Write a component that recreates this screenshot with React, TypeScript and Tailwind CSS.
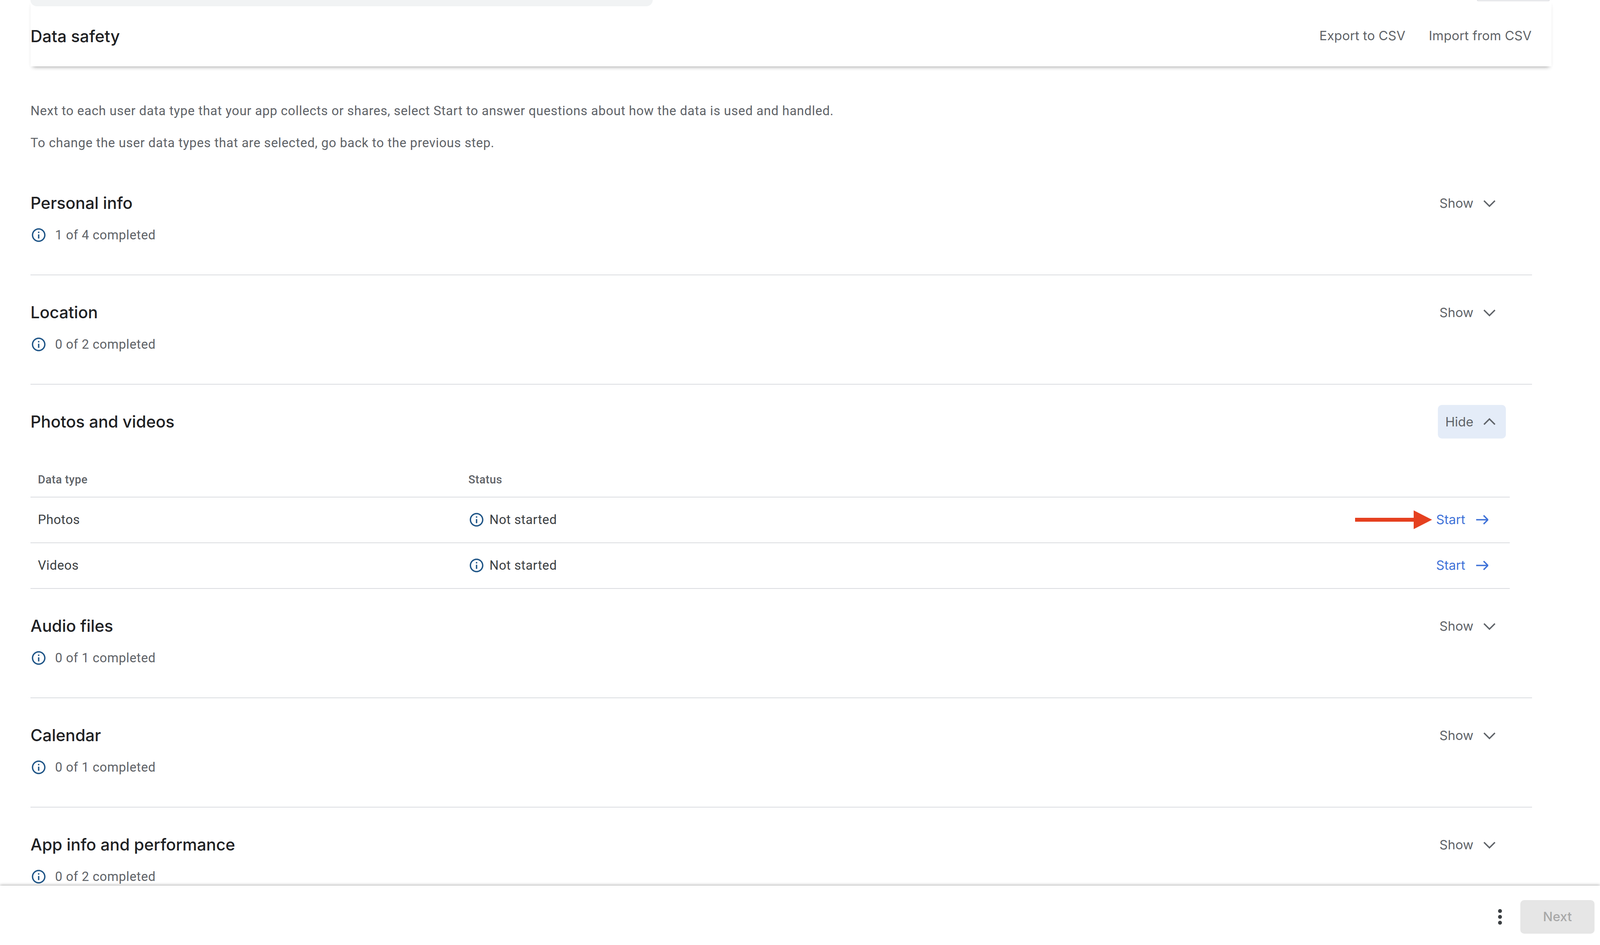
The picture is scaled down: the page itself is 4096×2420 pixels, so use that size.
import React from 'react';

const gsans = 'font-["Inter","Roboto",sans-serif]';
const roboto = 'font-["Roboto","Liberation_Sans",sans-serif]';

const InfoIcon: React.FC = () => (
    <svg viewBox="0 0 24 24" className="w-[42px] h-[42px] shrink-0" fill="#1f5587">
        <path d="M11 7h2v2h-2zm0 4h2v6h-2zm1-9C6.48 2 2 6.48 2 12s4.48 10 10 10 10-4.48 10-10S17.52 2 12 2zm0 18c-4.41 0-8-3.59-8-8s3.59-8 8-8 8 3.59 8 8-3.59 8-8 8z" />
    </svg>
);

const Chevron: React.FC<{ up?: boolean }> = ({ up }) => (
    <svg viewBox="0 0 46 46" className="w-[46px] h-[46px]" fill="none" stroke="#5f6368" strokeWidth="3.6">
        <path d={up ? 'M9 30 L23 16 L37 30' : 'M9 17 L23 31 L37 17'} />
    </svg>
);

const ArrowRight: React.FC = () => (
    <svg viewBox="0 0 32 32" className="w-[32px] h-[32px]" fill="none" stroke="#3f72d8" strokeWidth="3.6">
        <path d="M1 16 H30 M20 5 L31 16 L20 27" />
    </svg>
);

const Toggle: React.FC<{ open?: boolean }> = ({ open }) => (
    <div className={`h-[86px] pl-[19px] pr-[19px] flex items-center gap-[18px] rounded-[10px] text-[#5f6368] ${open ? 'bg-[#e4ecf8]' : ''}`}>
        <span className={`${gsans} text-[33px] leading-[40px]`}>{open ? 'Hide' : 'Show'}</span>
        <Chevron up={open} />
    </div>
);

const TitleRow: React.FC<{ title: string; open?: boolean }> = ({ title, open }) => (
    <div className="h-[86px] pr-[67px] flex items-center justify-between">
        <h2 className={`${gsans} font-medium text-[42px] leading-[60px] tracking-[-0.1px] text-[#202124]`}>{title}</h2>
        <Toggle open={open} />
    </div>
);

const Section: React.FC<{ title: string; done: string }> = ({ title, done }) => (
    <section className="h-[280px] pt-[52px] border-b-2 border-[#dadce0]">
        <TitleRow title={title} />
        <div className="mt-[9px] h-[60px] flex items-center gap-[21px]">
            <InfoIcon />
            <span className={`${roboto} text-[33px] tracking-[0.6px] text-[#5f6368]`}>{done}</span>
        </div>
    </section>
);

const DataRow: React.FC<{ name: string; marked?: boolean }> = ({ name, marked }) => (
    <div className="relative h-[117px] grid grid-cols-[1102px_1fr_auto] items-center border-b-2 border-[#dadce0] pl-[19px] pr-[55px] pb-[1px]">
        <span className={`${roboto} text-[33px] tracking-[0.6px] text-[#3c4043]`}>{name}</span>
        <span className="flex items-center gap-[12px]">
            <InfoIcon />
            <span className={`${roboto} text-[33px] tracking-[0.6px] text-[#3c4043]`}>Not started</span>
        </span>
        <span className="flex items-center gap-[27px]">
            <span className={`${gsans} text-[33px] text-[#3f72d8]`}>Start</span>
            <ArrowRight />
        </span>
        {marked && (
            <svg viewBox="0 0 197 48" className="absolute right-[199px] top-[33px] w-[197px] h-[48px]" fill="#e5401f">
                <path d="M0 19 H150 V0 L197 24 L150 48 V29 H0 Z" />
            </svg>
        )}
    </div>
);

export default function App() {
    return (
        <div className="w-full h-screen flex flex-col bg-white overflow-hidden">
            <div className="flex-1 min-h-0 overflow-hidden">
                <div className="w-[3894px] ml-[78px] h-[170px] shadow-[0_7px_10px_-6px_rgba(0,0,0,0.4)] bg-white">
                    <div className="h-[16px] flex items-start justify-between pr-[5px]">
                        <div className="w-[1593px] h-[16px] bg-[#f1f3f4] rounded-b-[16px]" />
                        <div className="w-[186px] h-[3px] border-b-2 border-x-2 border-[#dadce0] rounded-b-[8px]" />
                    </div>
                    <div className="h-[152px] pr-[51px] flex items-center justify-between">
                        <h1 className={`${gsans} font-medium text-[42px] text-[#202124]`}>Data safety</h1>
                        <div className={`${gsans} flex gap-[60px] text-[33px] tracking-[0.15px] text-[#5f6368]`}>
                            <span>Export to CSV</span>
                            <span>Import from CSV</span>
                        </div>
                    </div>
                </div>

                <div className="w-[3844px] ml-[78px]">
                    <div className={`${roboto} mt-[84px] mb-[29px] flex flex-col gap-[22px] text-[33px] leading-[60px] tracking-[0.74px] text-[#5f6368]`}>
                        <p>Next to each user data type that your app collects or shares, select Start to answer questions about how the data is used and handled.</p>
                        <p>To change the user data types that are selected, go back to the previous step.</p>
                    </div>

                    <Section title="Personal info" done="1 of 4 completed" />
                    <Section title="Location" done="0 of 2 completed" />

                    <section className="pt-[52px]">
                        <TitleRow title="Photos and videos" open />
                        <div className="w-[3787px] mt-[63px]">
                            <div className="h-[88px] grid grid-cols-[1102px_1fr] items-center border-b-2 border-[#dadce0] pl-[19px]">
                                <span className={`${roboto} font-medium text-[29px] tracking-[0.5px] text-[#5f6368]`}>Data type</span>
                                <span className={`${roboto} font-medium text-[29px] tracking-[0.5px] text-[#5f6368]`}>Status</span>
                            </div>
                            <DataRow name="Photos" marked />
                            <DataRow name="Videos" />
                        </div>
                    </section>

                    <Section title="Audio files" done="0 of 1 completed" />
                    <Section title="Calendar" done="0 of 1 completed" />
                    <Section title="App info and performance" done="0 of 2 completed" />
                </div>
            </div>

            <footer className="relative z-10 h-[152px] shrink-0 bg-white shadow-[0_-2px_7px_rgba(0,0,0,0.28)] flex items-center justify-end pt-[8px] pr-[14px] gap-[47px]">
                <div className="flex flex-col gap-[5px]">
                    <span className="w-[10px] h-[10px] rounded-full bg-[#3c4043]" />
                    <span className="w-[10px] h-[10px] rounded-full bg-[#3c4043]" />
                    <span className="w-[10px] h-[10px] rounded-full bg-[#3c4043]" />
                </div>
                <div className={`${gsans} w-[190px] h-[86px] rounded-[10px] bg-[#e6e6e6] flex items-center justify-center font-medium text-[33px] text-[#a8a8a8]`}>Next</div>
            </footer>
        </div>
    );
}
